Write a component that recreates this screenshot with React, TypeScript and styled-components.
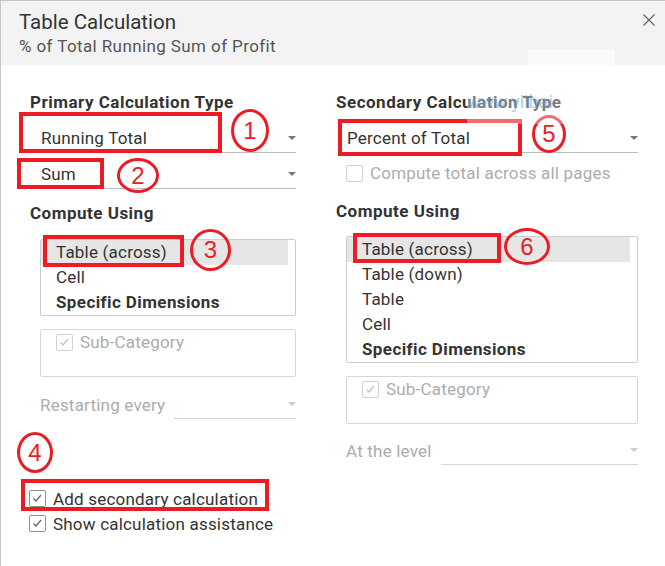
import styled, { createGlobalStyle } from 'styled-components';

const RED = '#ec1c24';

const GlobalStyle = createGlobalStyle`
  body {
    margin: 0;
    background: #fff;
    color: #333;
    font-family: Roboto, 'Liberation Sans', sans-serif;
  }
`;

const Dialog = styled.div`
  position: relative;
  width: 665px;
  height: 566px;
  box-sizing: border-box;
  border-top: 1px solid #c6c6c6;
  border-left: 1px solid #c6c6c6;
  background: #fff;
  overflow: hidden;
`;

const Header = styled.div`
  display: flex;
  justify-content: space-between;
  align-items: flex-start;
  height: 64px;
  box-sizing: border-box;
  padding: 9px 10px 0 18px;
  background: #f3f3f3;
`;

const Title = styled.div`
  font-size: 20.5px;
  line-height: 25px;
  color: #333;
`;

const Subtitle = styled.div`
  margin-top: 1px;
  font-size: 17px;
  line-height: 20px;
  letter-spacing: 0.4px;
  color: #555;
`;

const CloseButton = styled.button`
  display: flex;
  margin-top: 4px;
  padding: 0;
  border: 0;
  background: none;
  cursor: pointer;
`;

const Body = styled.div`
  display: grid;
  grid-template-columns: 276px 302px;
  column-gap: 40px;
  align-items: start;
  padding: 27px 0 0 19px;
`;

const Column = styled.div`
  display: flex;
  flex-direction: column;
`;

const SectionTitle = styled.div<{ $indent?: number; $mt?: number }>`
  margin: ${(p) => p.$mt ?? 0}px 0 0 ${(p) => p.$indent ?? 0}px;
  font-size: 17px;
  line-height: 20px;
  font-weight: 700;
  letter-spacing: 0.5px;
  color: #333;
`;

const Select = styled.div<{ $indent?: number; $pad?: number; $mt?: number; $disabled?: boolean }>`
  position: relative;
  display: flex;
  align-items: flex-end;
  height: 36px;
  box-sizing: border-box;
  margin: ${(p) => p.$mt ?? 0}px 0 0 ${(p) => p.$indent ?? 0}px;
  padding: 0 0 4px ${(p) => p.$pad ?? 0}px;
  border-bottom: 1px solid ${(p) => (p.$disabled ? '#d6d6d6' : '#bdbdbd')};
`;

const Value = styled.span`
  flex: 1;
  font-size: 17px;
  line-height: 20px;
  letter-spacing: 0.2px;
  color: #333;
`;

const Caret = styled.span<{ $disabled?: boolean }>`
  width: 0;
  height: 0;
  margin-bottom: 8px;
  border-left: 4px solid transparent;
  border-right: 4px solid transparent;
  border-top: 4px solid ${(p) => (p.$disabled ? '#cccccc' : '#777')};
`;

const CheckRow = styled.div<{ $indent?: number; $mt?: number; $h?: number }>`
  position: relative;
  display: flex;
  align-items: center;
  gap: 7px;
  height: ${(p) => p.$h ?? 20}px;
  margin: ${(p) => p.$mt ?? 0}px 0 0 ${(p) => p.$indent ?? 0}px;
`;

const CheckBox = styled.span<{ $disabled?: boolean }>`
  display: flex;
  flex-shrink: 0;
  width: 17px;
  height: 17px;
  box-sizing: border-box;
  border: 1px solid ${(p) => (p.$disabled ? '#d2d2d2' : '#8f8f8f')};
  border-radius: 2px;
  background: #fff;
`;

const Label = styled.span<{ $muted?: boolean }>`
  font-size: 17px;
  line-height: 20px;
  letter-spacing: 0.2px;
  color: ${(p) => (p.$muted ? '#acacac' : '#333')};
  white-space: nowrap;
`;

const ListBox = styled.div<{ $indent: number; $mt: number }>`
  margin: ${(p) => p.$mt}px 0 0 ${(p) => p.$indent}px;
  padding-right: 7px;
  border: 1px solid #cdcdcd;
  border-radius: 2px;
`;

const ListItem = styled.div<{ $selected?: boolean; $bold?: boolean }>`
  position: relative;
  height: 25px;
  padding-left: 15px;
  font-size: 17px;
  line-height: 25px;
  letter-spacing: ${(p) => (p.$bold ? 0.4 : 0.2)}px;
  font-weight: ${(p) => (p.$bold ? 700 : 400)};
  color: #333;
  background: ${(p) => (p.$selected ? '#e6e6e6' : 'transparent')};
`;

const SubBox = styled.div<{ $indent: number }>`
  height: 48px;
  box-sizing: border-box;
  margin: 13px 0 0 ${(p) => p.$indent}px;
  padding: 2px 15px;
  border: 1px solid #d6d6d6;
  border-radius: 2px;
`;

const FieldRow = styled.div<{ $indent: number; $mt: number }>`
  display: flex;
  align-items: flex-end;
  gap: 9px;
  height: 32px;
  margin: ${(p) => p.$mt}px 0 0 ${(p) => p.$indent}px;

  ${Label} {
    margin-bottom: 4px;
  }

  ${Select} {
    flex: 1;
    height: 32px;
  }
`;

const Footer = styled.div`
  display: flex;
  flex-direction: column;
  margin-top: 21px;
  padding-left: 28px;
`;

// annotation marks drawn on top of the screenshot
const Callout = styled.span<{ $x: number; $y: number; $w: number; $h: number }>`
  position: absolute;
  left: ${(p) => p.$x}px;
  top: ${(p) => p.$y}px;
  width: ${(p) => p.$w}px;
  height: ${(p) => p.$h}px;
  box-sizing: border-box;
  border: 4px solid ${RED};
  pointer-events: none;
`;

const Ring = styled.span<{ $x: number; $y: number; $w: number; $h: number }>`
  position: absolute;
  left: ${(p) => p.$x}px;
  top: ${(p) => p.$y}px;
  width: ${(p) => p.$w}px;
  height: ${(p) => p.$h}px;
  box-sizing: border-box;
  display: flex;
  align-items: center;
  justify-content: center;
  border: 3px solid ${RED};
  border-radius: 50%;
  color: ${RED};
  font-family: 'Liberation Sans', Arial, sans-serif;
  font-size: 24px;
  line-height: 1;
  font-weight: 400;
  letter-spacing: 0;
  pointer-events: none;
`;

const Watermark = styled.span`
  position: absolute;
  left: 466px;
  top: 85px;
  z-index: 3;
  width: 106px;
  height: 38px;
  box-sizing: border-box;
  padding-top: 6px;
  background: rgba(255, 255, 255, 0.35);
  color: rgba(90, 165, 220, 0.55);
  font-size: 18px;
  line-height: 20px;
  white-space: nowrap;
  overflow: hidden;
`;

const WatermarkTab = styled.span`
  position: absolute;
  left: 527px;
  top: 49px;
  width: 87px;
  height: 15px;
  background: rgba(255, 255, 255, 0.55);
`;

const Check = ({ checked, disabled }: { checked?: boolean; disabled?: boolean }) => (
  <CheckBox $disabled={disabled}>
    {checked && (
      <svg width='15' height='15' viewBox='0 0 15 15'>
        <polyline
          points='3.5,7.5 6,10 11,4'
          fill='none'
          stroke={disabled ? '#c4c4c4' : '#666'}
          strokeWidth='1.3'
        />
      </svg>
    )}
  </CheckBox>
);

const App = () => {
  return (
    <>
      <GlobalStyle />
      <Dialog>
        <Header>
          <div>
            <Title>Table Calculation</Title>
            <Subtitle>% of Total Running Sum of Profit</Subtitle>
          </div>
          <CloseButton aria-label='Close'>
            <svg width='12' height='12' viewBox='0 0 12 12'>
              <path d='M0.5 0.5 L11.5 11.5 M11.5 0.5 L0.5 11.5' stroke='#666' strokeWidth='1.2' />
            </svg>
          </CloseButton>
        </Header>

        <Body>
          <Column>
            <SectionTitle $indent={10}>Primary Calculation Type</SectionTitle>
            <Select $mt={5} $pad={21}>
              <Value>Running Total</Value>
              <Caret />
              <Callout $x={-1} $y={-5} $w={203} $h={41} />
              <Ring $x={211} $y={-8} $w={38} $h={43}>1</Ring>
            </Select>
            <Select $pad={21}>
              <Value>Sum</Value>
              <Caret />
              <Callout $x={-3} $y={5} $w={87} $h={31} />
              <Ring $x={97} $y={5} $w={42} $h={35}>2</Ring>
            </Select>

            <SectionTitle $indent={10} $mt={14}>Compute Using</SectionTitle>
            <ListBox $indent={20} $mt={16}>
              <ListItem $selected>
                Table (across)
                <Callout $x={2} $y={-5} $w={141} $h={32} />
                <Ring $x={149} $y={-11} $w={41} $h={42}>3</Ring>
              </ListItem>
              <ListItem>Cell</ListItem>
              <ListItem $bold>Specific Dimensions</ListItem>
            </ListBox>
            <SubBox $indent={20}>
              <CheckRow>
                <Check checked disabled />
                <Label $muted>Sub-Category</Label>
              </CheckRow>
            </SubBox>
            <FieldRow $indent={20} $mt={10}>
              <Label $muted>Restarting every</Label>
              <Select $disabled>
                <Value />
                <Caret $disabled />
              </Select>
            </FieldRow>
          </Column>

          <Column>
            <SectionTitle>Secondary Calculation Type</SectionTitle>
            <Select $mt={5} $indent={9} $pad={2}>
              <Value>Percent of Total</Value>
              <Caret />
              <Callout $x={-7} $y={2} $w={184} $h={37} />
              <Ring $x={187} $y={-2} $w={34} $h={38}>5</Ring>
            </Select>
            <CheckRow $indent={10} $mt={10}>
              <Check disabled />
              <Label $muted>Compute total across all pages</Label>
            </CheckRow>

            <SectionTitle $mt={18}>Compute Using</SectionTitle>
            <ListBox $indent={10} $mt={15}>
              <ListItem $selected>
                Table (across)
                <Callout $x={6} $y={-4} $w={148} $h={30} />
                <Ring $x={157} $y={-9} $w={46} $h={37}>6</Ring>
              </ListItem>
              <ListItem>Table (down)</ListItem>
              <ListItem>Table</ListItem>
              <ListItem>Cell</ListItem>
              <ListItem $bold>Specific Dimensions</ListItem>
            </ListBox>
            <SubBox $indent={10}>
              <CheckRow>
                <Check checked disabled />
                <Label $muted>Sub-Category</Label>
              </CheckRow>
            </SubBox>
            <FieldRow $indent={10} $mt={9}>
              <Label $muted>At the level</Label>
              <Select $disabled>
                <Value />
                <Caret $disabled />
              </Select>
            </FieldRow>
          </Column>
        </Body>

        <Footer>
          <CheckRow $h={25}>
            <Check checked />
            <Label>Add secondary calculation</Label>
            <Callout $x={-8} $y={-7} $w={248} $h={32} />
            <Ring $x={-12} $y={-54} $w={36} $h={41}>4</Ring>
          </CheckRow>
          <CheckRow $h={25}>
            <Check checked />
            <Label>Show calculation assistance</Label>
          </CheckRow>
        </Footer>

        <WatermarkTab />
        <Watermark>www.yiibai.</Watermark>
      </Dialog>
    </>
  );
};

export default App;
